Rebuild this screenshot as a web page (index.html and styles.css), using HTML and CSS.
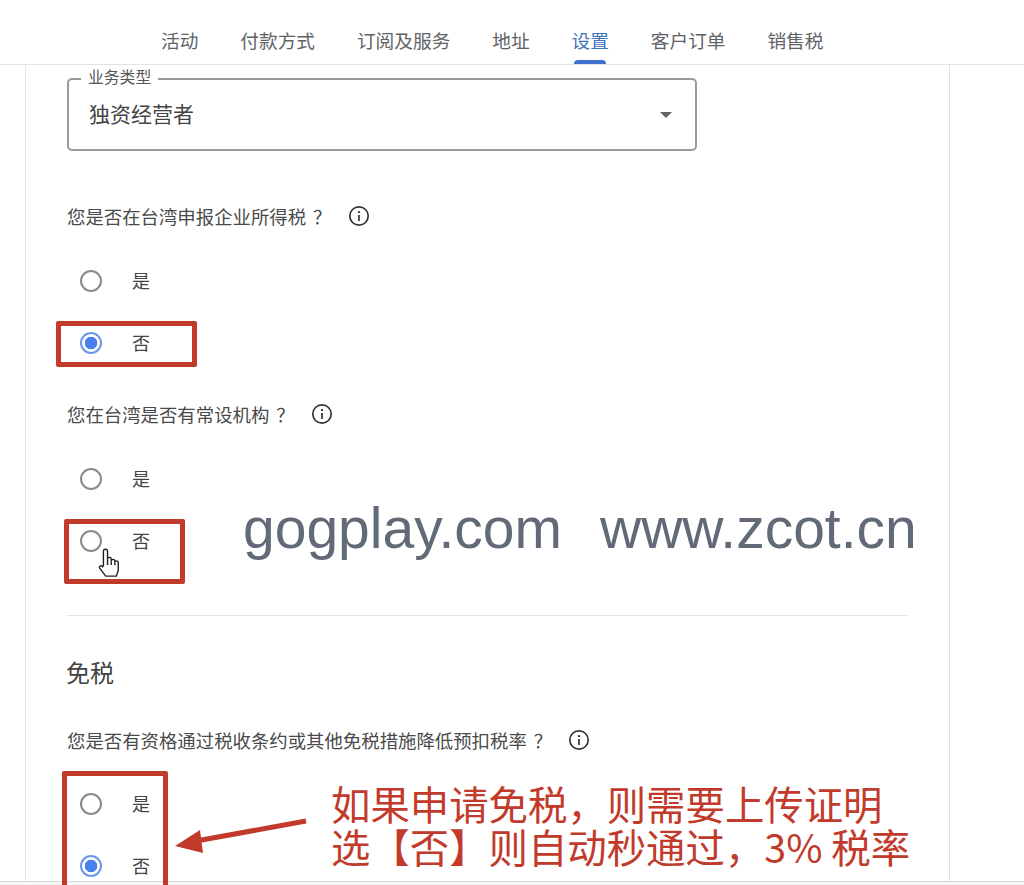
FILE: index.html
```html
<!DOCTYPE html>
<html lang="zh-CN">
<head>
  <meta charset="UTF-8" />
  <title>设置</title>
  <link rel="stylesheet" href="styles.css">
</head>
<body>
  <div class="page">
    <nav class="tabs">
      <a class="tab">活动</a>
      <a class="tab">付款方式</a>
      <a class="tab">订阅及服务</a>
      <a class="tab">地址</a>
      <a class="tab active">设置</a>
      <a class="tab">客户订单</a>
      <a class="tab">销售税</a>
    </nav>

    <main class="panel">
      <div class="select-field">
        <span class="select-label">业务类型</span>
        <span class="select-value">独资经营者</span>
        <span class="select-arrow"></span>
      </div>

      <div class="question q-first">
        <span class="question-text">您是否在台湾申报企业所得税<span class="qmark">？</span></span>
        <svg class="info" viewBox="0 0 22 22"><circle cx="11" cy="11" r="9.2"/><path d="M11 10v6"/><path class="dot" d="M11 6.2v1.8"/></svg>
      </div>
      <div class="radio-row"><span class="radio"></span><span class="radio-text">是</span></div>
      <div class="radio-row"><span class="radio checked"></span><span class="radio-text">否</span></div>

      <div class="question q-second">
        <span class="question-text">您在台湾是否有常设机构<span class="qmark">？</span></span>
        <svg class="info" viewBox="0 0 22 22"><circle cx="11" cy="11" r="9.2"/><path d="M11 10v6"/><path class="dot" d="M11 6.2v1.8"/></svg>
      </div>
      <div class="radio-row"><span class="radio"></span><span class="radio-text">是</span></div>
      <div class="radio-row"><span class="radio"></span><span class="radio-text">否</span></div>

      <hr class="divider">

      <h2 class="section-title">免税</h2>

      <div class="question q-third">
        <span class="question-text">您是否有资格通过税收条约或其他免税措施降低预扣税率<span class="qmark">？</span></span>
        <svg class="info" viewBox="0 0 22 22"><circle cx="11" cy="11" r="9.2"/><path d="M11 10v6"/><path class="dot" d="M11 6.2v1.8"/></svg>
      </div>
      <div class="radio-row"><span class="radio"></span><span class="radio-text">是</span></div>
      <div class="radio-row"><span class="radio checked"></span><span class="radio-text">否</span></div>
    </main>
    <div class="footer-line"></div>

    <!-- anotaciones encima de la captura -->
    <div class="mark mark-one"></div>
    <div class="mark mark-two"></div>
    <div class="mark mark-three"></div>

    <svg class="cursor" viewBox="0 0 24 32">
      <path d="M5.500 19V3.500a2.200 2.200 0 0 1 4.400 0V12a2 2 0 0 1 4 0v2a1.900 1.900 0 0 1 3.800 0v1.500a1.800 1.800 0 0 1 3.600 0V24l-2 6H8L1.500 21.500c-1.200-2 1.800-3.500 3-1.500z"/>
      <path d="M9.900 12v6M13.900 14v4M17.700 15.500v3"/>
    </svg>

    <div class="watermark"><span>gogplay.com</span><span>www.zcot.cn</span></div>

    <svg class="arrow" viewBox="0 0 140 40">
      <path class="arrow-line" d="M132 5L22 25"/>
      <path class="arrow-head" d="M1 30L26 14L29 37z"/>
    </svg>

    <div class="note">
      <div>如果申请免税，则需要上传证明</div>
      <div>选【否】则自动秒通过，3% 税率</div>
    </div>
  </div>
</body>
</html>
```

FILE: styles.css
```css
html, body {
  margin: 0;
  height: 100%;
  overflow: hidden;
  background-color: #fff;
}
body {
  font-family: "Noto Sans CJK SC", "Liberation Sans", sans-serif;
  color: #444;
}
.page {
  position: relative;
  height: 885px;
  overflow: hidden;
}
.tabs {
  display: flex;
  gap: 41.9px;
  height: 65px;
  padding-left: 161px;
  box-sizing: border-box;
  border-bottom: 1px solid #e3e3e3;
}
.tab {
  position: relative;
  font-size: 18.7px;
  line-height: 27px;
  padding-top: 26px;
  color: #5f6368;
}
.tab.active {
  color: #3f74b8;
}
.tab.active::after {
  content: "";
  position: absolute;
  left: 2px;
  right: 3px;
  bottom: 0;
  height: 4px;
  border-radius: 4px 4px 0 0;
  background-color: #3f6fd0;
}
.panel {
  width: 925px;
  height: 816px;
  margin-left: 25px;
  padding: 13px 0 0 41px;
  box-sizing: border-box;
  overflow: hidden;
  border-left: 1px solid #e6e6e6;
  border-right: 1px solid #e0e0e0;
}
.footer-line {
  height: 4px;
  border-top: 1px solid #d8d8d8;
  background-color: #f6f6f6;
}
.select-field {
  position: relative;
  display: flex;
  align-items: center;
  justify-content: space-between;
  width: 630px;
  height: 73px;
  padding: 0 23px 0 20px;
  box-sizing: border-box;
  border: 2px solid #9a9a9a;
  border-radius: 5px;
}
.select-label {
  position: absolute;
  left: 12px;
  top: -15px;
  padding: 0 7px;
  background-color: #fff;
  font-size: 15.8px;
  line-height: 24px;
  color: #555;
}
.select-value {
  padding-bottom: 4px;
  font-size: 21px;
  color: #444;
}
.select-arrow {
  width: 0;
  height: 0;
  border-left: 6.5px solid transparent;
  border-right: 6.5px solid transparent;
  border-top: 6.5px solid #5f6368;
}
.question {
  display: flex;
  align-items: center;
  gap: 16px;
  height: 24px;
  font-size: 18.4px;
  color: #4a4a4a;
}
.question-text {
  padding-bottom: 2px;
}
.qmark {
  margin-left: 7px;
}
.q-first { margin-top: 54px; }
.q-second { margin-top: 29px; }
.q-third { margin-top: 41px; }
.question + .radio-row { margin-top: 21px; }
.q-third + .radio-row { margin-top: 20px; }
.info {
  width: 22px;
  height: 22px;
  margin-top: -3px;
  fill: none;
  stroke: #333;
  stroke-width: 1.7;
}
.info .dot {
  stroke-width: 2.2;
}
.radio-row {
  display: flex;
  align-items: center;
  gap: 30px;
  height: 62px;
  padding-left: 13px;
  font-size: 18px;
  color: #444;
}
.radio-text {
  padding-bottom: 2px;
}
.radio {
  width: 22px;
  height: 22px;
  box-sizing: border-box;
  border: 2px solid #8a8a8a;
  border-radius: 50%;
}
.radio.checked {
  border-color: #6b97e8;
  background: radial-gradient(circle, #4a80ee 0 6px, #fff 6.6px);
}
.divider {
  margin: 43px 0 0;
  width: 840px;
  height: 1px;
  border: none;
  background-color: #e2e2e2;
}
.section-title {
  margin: 40px 0 0 -1px;
  font-size: 24px;
  line-height: 32px;
  font-weight: 400;
  color: #444;
}
.mark {
  position: absolute;
  box-sizing: border-box;
  border: 5px solid #c23a2b;
  border-radius: 2px;
}
.mark-one { left: 56px; top: 321px; width: 141px; height: 46px; }
.mark-two { left: 64px; top: 519px; width: 121px; height: 65px; }
.mark-three { left: 62px; top: 771px; width: 106px; height: 130px; }
.cursor {
  position: absolute;
  left: 98px;
  top: 548px;
  width: 23px;
  height: 30px;
  fill: #fff;
  stroke: #222;
  stroke-width: 1.5;
}
.watermark {
  position: absolute;
  left: 243px;
  top: 496px;
  display: flex;
  gap: 38px;
  font-family: "Liberation Sans", sans-serif;
  font-size: 57px;
  line-height: 64px;
  color: #626977;
}
.arrow {
  position: absolute;
  left: 174px;
  top: 816px;
  width: 140px;
  height: 40px;
}
.arrow-line {
  fill: none;
  stroke: #c23a2b;
  stroke-width: 5;
}
.arrow-head {
  fill: #c23a2b;
}
.note {
  position: absolute;
  left: 331px;
  top: 781px;
  font-size: 39.4px;
  line-height: 43px;
  color: #c23a2b;
  white-space: nowrap;
}
```
